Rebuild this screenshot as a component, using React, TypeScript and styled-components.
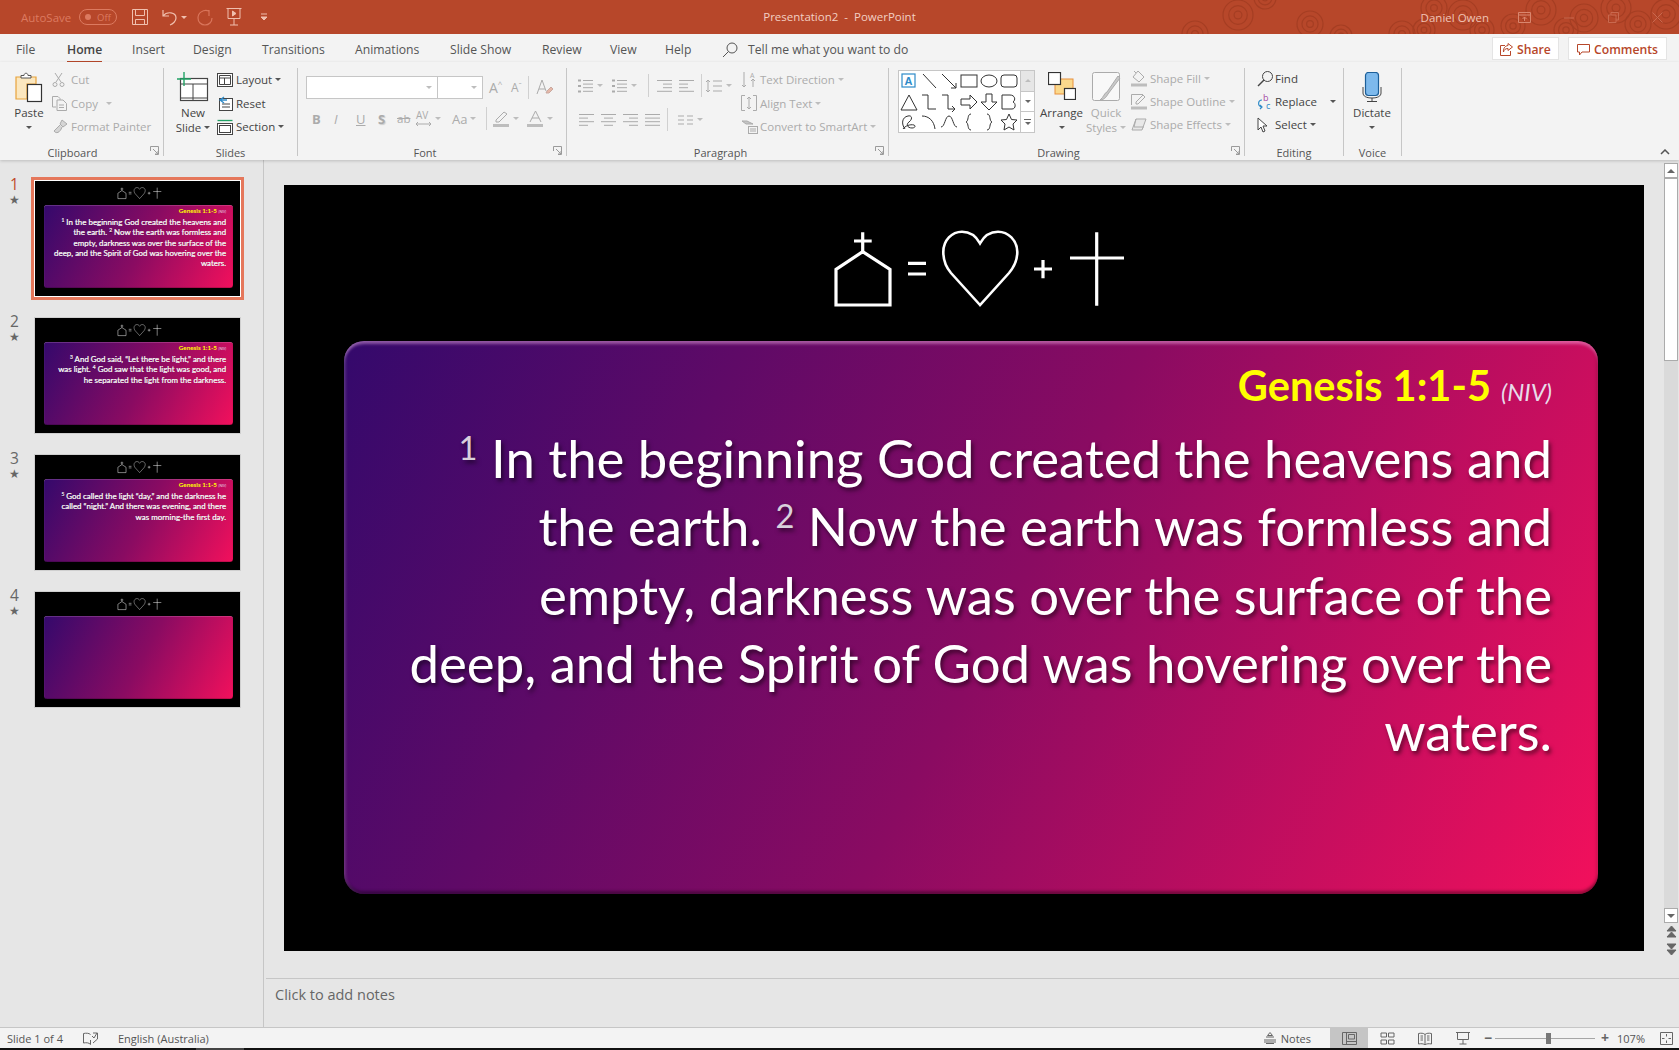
import React from 'react';
import styled, { createGlobalStyle } from 'styled-components';

const GREY = '#ABABAB';
const BLUE = '#2E8BC9';

const GlobalStyle = createGlobalStyle`
  html, body { margin: 0; padding: 0; background: #000; }
  * { box-sizing: border-box; }
`;

const Sup = styled.sup`
  font-size: 0.62em;
  line-height: 0;
  color: #d9d0dc;
  vertical-align: 0.55em;
`;

type IconProps = { w: number; h: number; c?: string; sw?: number; children: React.ReactNode };

const Icon: React.FC<IconProps> = ({ w, h, c = GREY, sw = 1, children }) => (
  <IconSvg width={w} height={h} viewBox={`0 0 ${w} ${h}`} fill="none" stroke={c} strokeWidth={sw}>
    {children}
  </IconSvg>
);

const Symbols: React.FC = () => (
  <svg width="300" height="82" viewBox="0 0 300 82" fill="none" stroke="#fff" strokeWidth="3.2">
    <path d="M6 77V41.3L32.7 23.7 60 41.3V77Z" />
    <path d="M32.7 4.3V23.7M24 13H41.7" />
    <path d="M78 35.3H96M78 46H96" />
    <path
      d="M150 77L121 45C115 38 113.3 30 113.3 24C113.3 12 122 3.7 132 3.7C140 3.7 146 8 150 15.3C154 8 160 3.7 168 3.7C178 3.7 187.3 12 187.3 24C187.3 30 185 38 179 45Z"
      strokeWidth="2.6"
    />
    <path d="M204 41H222M213 32V50.3" />
    <path d="M266.7 4.3V77.7M240 30H294" />
  </svg>
);

type SlideData = { verse: boolean; lines: React.ReactNode[] };

const SLIDES: SlideData[] = [
  {
    verse: true,
    lines: [
      <><Sup>1</Sup> In the beginning God created the heavens and</>,
      <>the earth. <Sup>2</Sup> Now the earth was formless and</>,
      <>empty, darkness was over the surface of the</>,
      <>deep, and the Spirit of God was hovering over the</>,
      <>waters.</>,
    ],
  },
  {
    verse: true,
    lines: [
      <><Sup>3</Sup> And God said, “Let there be light,” and there</>,
      <>was light. <Sup>4</Sup> God saw that the light was good, and</>,
      <>he separated the light from the darkness.</>,
    ],
  },
  {
    verse: true,
    lines: [
      <><Sup>5</Sup> God called the light “day,” and the darkness he</>,
      <>called “night.” And there was evening, and there</>,
      <>was morning-the first day.</>,
    ],
  },
  { verse: false, lines: [] },
];

const SlideView: React.FC<{ data: SlideData; scale?: number }> = ({ data, scale = 1 }) => (
  <Slide $scale={scale}>
    <SymbolRow>
      <Symbols />
    </SymbolRow>
    <Panel>
      {data.verse && (
        <Reference>
          Genesis 1:1-5 <small>(NIV)</small>
        </Reference>
      )}
      <Verses $thumb={scale < 1}>
        {data.lines.map((line, i) => (
          <div key={i}>{line}</div>
        ))}
      </Verses>
    </Panel>
  </Slide>
);

const RINGS = [
  [1195, 34, 13], [1238, 15, 15], [1265, -2, 11], [1310, 24, 13], [1341, 36, 11], [1402, 34, 13],
  [1424, 30, 11], [1434, 8, 13], [1463, 15, 15], [1482, 30, 12], [1513, 26, 12], [1541, 10, 15],
  [1566, 30, 12], [1584, 18, 14], [1616, 8, 15], [1638, 24, 13], [1666, 14, 15],
];

const TitleRings: React.FC = () => (
  <RingSvg width="1679" height="34" viewBox="0 0 1679 34" fill="none" stroke="#A53E23" strokeWidth="1.2">
    {RINGS.map(([x, y, r], i) => (
      <g key={i}>
        <circle cx={x} cy={y} r={r} />
        <circle cx={x} cy={y} r={r * 0.62} />
        <circle cx={x} cy={y} r={r * 0.26} />
      </g>
    ))}
  </RingSvg>
);

const TABS = ['File', 'Home', 'Insert', 'Design', 'Transitions', 'Animations', 'Slide Show', 'Review', 'View', 'Help'];
const TAB_X = [16, 67, 132, 193, 262, 355, 450, 542, 610, 665];

const Launcher: React.FC = () => (
  <LauncherBox>
    <Icon w={9} h={9} c="#9A9A9A">
      <path d="M.5 5V.5H8.5V8.5H5M3 3L8 8M8 5V8H5" />
    </Icon>
  </LauncherBox>
);

const Small: React.FC<{ icon: React.ReactNode; label: string; off?: boolean; caret?: boolean; iconW?: number }> = ({
  icon, label, off, caret, iconW = 16,
}) => (
  <SmallRow $off={off}>
    <SmallIcon $w={iconW}>{icon}</SmallIcon>
    <span>{label}</span>
    {caret && <Caret $c={off ? '#BDBDBD' : '#555'} />}
  </SmallRow>
);

const ListLines: React.FC<{ x?: number; lefts?: number[]; rights?: number[]; marks?: boolean }> = ({
  x = 0, lefts = [0, 0, 0, 0], rights = [15, 15, 15, 15], marks,
}) => (
  <Icon w={16} h={14}>
    {lefts.map((l, i) => (
      <path key={i} d={`M${x + l} ${1.5 + i * 3.6}H${rights[i]}`} />
    ))}
    {marks && <path d="M0 1.5H3M0 7H3M0 12.5H3" strokeWidth="2" />}
  </Icon>
);

const GalleryShapes: React.ReactNode[] = [
  <g key="a"><rect x="3" y="3" width="13" height="13" stroke={BLUE} strokeWidth="1.2" /><text x="5.6" y="13.5" fontSize="11" fontWeight="700" fontFamily="Liberation Sans, sans-serif" fill={BLUE} stroke="none">A</text></g>,
  <path key="b" d="M4 3L17 17" />,
  <path key="c" d="M3 3L17 17M12 17H17V12" />,
  <rect key="d" x="2" y="4" width="16" height="12" />,
  <ellipse key="e" cx="10" cy="10" rx="8" ry="6" />,
  <rect key="f" x="2" y="4" width="16" height="12" rx="3" />,
  <path key="g" d="M10 3L2 18H18Z" />,
  <path key="h" d="M3 3H9V17H17" />,
  <path key="i" d="M3 3H9V17H16M13 14L16 17L13 20" />,
  <path key="j" d="M2 7H11V3L18 10L11 17V13H2Z" />,
  <path key="k" d="M7 2H13V10H18L10 18L2 10H7Z" />,
  <path key="l" d="M3 3H11C16 3 17 8 14 10C17 11 17 17 13 17H3Z" />,
  <path key="m" d="M6 17C2 12 3 5 9 4C13 3 14 7 10 10C7 12 8 16 13 16C16 16 17 14 15 13C11 12 6 14 4 17" />,
  <path key="n" d="M3 4C10 4 15 9 16 17" />,
  <path key="o" d="M2 15C6 15 6 4 10 4C14 4 14 15 18 15" />,
  <path key="p" d="M12 2C8 2 10 9 7 10C10 11 8 18 12 18" />,
  <path key="q" d="M8 2C12 2 10 9 13 10C10 11 12 18 8 18" />,
  <path key="r" d="M10 2L12.5 7.5L18 8L14 12L15 18L10 15L5 18L6 12L2 8L7.5 7.5Z" />,
];

const App: React.FC = () => (
  <Page>
    <GlobalStyle />
    <TitleBar>
      <TitleRings />
      <Qat>
        <AutoSave>AutoSave</AutoSave>
        <Toggle><Dot /><span>Off</span></Toggle>
        <QatIcon $x={15}>
          <Icon w={16} h={16} c="#F0BFAE">
            <path d="M.5.5H15.5V15.5H.5ZM3.5.5V6.5H12.5V.5M3.5 15.5V10.5H12.5V15.5" />
          </Icon>
        </QatIcon>
        <QatIcon $x={14}>
          <Icon w={16} h={17} c="#F0BFAE" sw={1.2}>
            <path d="M1 1V7H7M1 7C5 2 14 3 14 9C14 12 11 15 8 16" />
          </Icon>
        </QatIcon>
        <Caret $c="#F0BFAE" />
        <QatIcon $x={10}>
          <Icon w={16} h={17} c="#D9755B" sw={1.2}>
            <path d="M12 1V7M12 2C6 0 1 4 1 9C1 13 4 16 8 16C12 16 15 13 15 9" />
          </Icon>
        </QatIcon>
        <QatIcon $x={13}>
          <Icon w={16} h={18} c="#F0BFAE">
            <path d="M.5.5H15.5M2 .5V10.5H14V.5M8 10.5V17M4 17H12" />
            <path d="M6.5 3L10 5.5L6.5 8Z" fill="#F0BFAE" />
          </Icon>
        </QatIcon>
        <QatIcon $x={18}>
          <Icon w={8} h={8} c="#F0BFAE">
            <path d="M1 1H7" />
            <path d="M1 4H7L4 7Z" fill="#F0BFAE" />
          </Icon>
        </QatIcon>
      </Qat>
      <DocTitle>Presentation2  -  PowerPoint</DocTitle>
      <UserArea>
        <UserName>Daniel Owen</UserName>
        <WindowIcons>
          <Icon w={13} h={11} c="#D9866E"><path d="M.5.5H12.5V10.5H.5ZM.5 3H12.5M6.5 9V5M4.5 7L6.5 5L8.5 7" /></Icon>
          <Icon w={11} h={11} c="#C9694F"><path d="M0 6H10" /></Icon>
          <Icon w={11} h={11} c="#C9694F"><path d="M.5 3H8V10.5H.5ZM3 3V.5H10.5V8H8" /></Icon>
          <Icon w={11} h={11} c="#C9694F"><path d="M.5.5L10.5 10.5M10.5.5L.5 10.5" /></Icon>
        </WindowIcons>
      </UserArea>
    </TitleBar>

    <TabRow>
      {TABS.map((tab, i) => (
        <Tab key={tab} $active={tab === 'Home'} $x={TAB_X[i]}>{tab}</Tab>
      ))}
      <Search $x={722}>
        <Icon w={16} h={16} c="#555">
          <circle cx="10" cy="6" r="5" />
          <path d="M6.5 9.5L1 15" />
        </Icon>
        <span>Tell me what you want to do</span>
      </Search>
      <ShareBox>
        <Icon w={13} h={13} c="#B7472A"><path d="M8 .5L12.5 4L8 7.5V5.5C5 5.5 4 7 3.5 9C3 6 4.5 3 8 2.5ZM5 2.5H.5V12.5H10.5V8" /></Icon>
        Share
      </ShareBox>
      <CommentBox>
        <Icon w={13} h={13} c="#B7472A"><path d="M.5 1.5H12.5V9H5L2.5 12V9H.5Z" /></Icon>
        Comments
      </CommentBox>
    </TabRow>

    <Ribbon>
      <Group $w={164}>
        <GroupBody>
          <Big $w={36} $ml={11}>
            <BigIcon>
              <Icon w={28} h={31} c="#555">
                <path d="M1 5H21V12H12V27H1Z" stroke="#E8A33D" strokeWidth="1.2" fill="#FBE7BF" />
                <path d="M6 6V3.5H9C9 .5 13 .5 13 3.5H16V6Z" fill="#fff" />
                <rect x="12.5" y="12.5" width="14" height="17" fill="#fff" stroke="#333" strokeWidth="1.2" />
              </Icon>
            </BigIcon>
            <span>Paste</span>
            <Caret $c="#555" />
          </Big>
          <SmallCol $ml={5}>
            <Small off label="Cut" icon={<Icon w={13} h={15}><path d="M3 1L9 10M10 1L4 10" /><circle cx="3" cy="12.5" r="2" /><circle cx="10" cy="12.5" r="2" /></Icon>} />
            <SmallRow $off>
              <SmallIcon $w={16}><Icon w={16} h={16}><path d="M4 12H.5V1.5H6L8 3.5V5M5 5H11L14.5 8.5V15.5H5ZM7 10H12M7 12.5H12" /></Icon></SmallIcon>
              <span>Copy</span>
              <CaretGap><Caret $c="#BDBDBD" /></CaretGap>
            </SmallRow>
            <Small off label="Format Painter" icon={<Icon w={17} h={16}><path d="M10 1L15 5L11 8L8 5ZM8 6L2 12C4 15 8 14 10 8" fill="#D5D5D5" /></Icon>} />
          </SmallCol>
        </GroupBody>
        <GroupLabel $pr={18}>Clipboard</GroupLabel>
        <Launcher />
      </Group>

      <Group $w={134}>
        <GroupBody>
          <Big $w={42} $ml={8}>
            <BigIcon>
              <Icon w={32} h={30} c="#444">
                <rect x="3.5" y="6.5" width="27" height="22" fill="#fff" strokeWidth="1.2" />
                <path d="M3.5 12H30.5M16 12V28.5M3.5 26H30.5" />
                <path d="M7 0V14M0 7H14" stroke="#21A366" strokeWidth="1.4" />
              </Icon>
            </BigIcon>
            <span>New</span>
            <BigLine>Slide<Caret $c="#555" /></BigLine>
          </Big>
          <SmallCol $ml={3}>
            <Small caret label="Layout" iconW={16} icon={<Icon w={16} h={14} c="#444"><rect x=".5" y=".5" width="15" height="13" fill="#fff" /><path d="M2.5 2.5H13.5V5H2.5ZM2.5 5V11.5H7.5V5M7.5 5V11.5H13.5V5" /></Icon>} />
            <Small label="Reset" iconW={16} icon={<Icon w={16} h={15} c="#444"><rect x="2.5" y="2.5" width="13" height="12" fill="#fff" /><path d="M5 8H13M5 11H13" /><path d="M7 1L3 4L7 7M3 4H10" stroke={BLUE} strokeWidth="1.3" /></Icon>} />
            <Small caret label="Section" iconW={16} icon={<Icon w={16} h={16} c="#444"><path d="M.5 1.5H15.5" stroke="#21A366" strokeWidth="1.3" /><rect x=".5" y="4.5" width="15" height="11" fill="#fff" /><rect x="2.5" y="6.5" width="11" height="7" /></Icon>} />
          </SmallCol>
        </GroupBody>
        <GroupLabel>Slides</GroupLabel>
      </Group>

      <Group $w={269}>
        <GroupBody $column>
          <ToolRow $mt={8} $ml={8}>
            <FontBox $w={132}><Caret $c="#BDBDBD" /></FontBox>
            <FontBox $w={46}><Caret $c="#BDBDBD" /></FontBox>
            <TextTool $w={22} $ml={1} $size={14}>A<Tiny>^</Tiny></TextTool>
            <TextTool $w={22} $size={12}>A<Tiny>ˇ</Tiny></TextTool>
            <ToolDivider $ml={1} $mr={7} />
            <Icon w={17} h={17}>
              <path d="M6 1L1 15M6 1L10 12M3 10H9" />
              <path d="M11 12L15 8L17 10L13 14H10Z" fill="#E6B8A8" stroke="#C9A9A0" />
            </Icon>
          </ToolRow>
          <ToolRow $mt={8} $ml={8}>
            <TextTool $w={22} $bold $size={13}>B</TextTool>
            <TextTool $w={22} $italic $size={13}>I</TextTool>
            <TextTool $w={22} $under $size={13}>U</TextTool>
            <TextTool $w={22} $bold $size={13} $shadow>S</TextTool>
            <TextTool $w={24} $ml={-3} $strike $size={11.5}>ab</TextTool>
            <ToolCell $w={31}>
              <Icon w={17} h={18}>
                <text x="1" y="9" fontSize="10" fontFamily="Open Sans, sans-serif" fill={GREY} stroke="none">AV</text>
                <path d="M1 14H16M3 12L1 14L3 16M14 12L16 14L14 16" />
              </Icon>
              <Caret $c="#BDBDBD" />
            </ToolCell>
            <TextTool $w={34} $size={13}>Aa<Caret $c="#BDBDBD" /></TextTool>
            <ToolDivider $ml={6} $mr={6} />
            <ToolCell $w={34}>
              <Icon w={17} h={17}>
                <path d="M3 10L11 2L14 4L6 12H3Z" />
                <path d="M0 15.5H16" strokeWidth="3" stroke="#BDBDBD" />
              </Icon>
              <Caret $c="#BDBDBD" />
            </ToolCell>
            <ToolCell $w={34}>
              <Icon w={17} h={17}>
                <path d="M3 12L8.5 1L14 12M5 8H12" />
                <path d="M0 15.5H16" strokeWidth="3" stroke="#BDBDBD" />
              </Icon>
              <Caret $c="#BDBDBD" />
            </ToolCell>
          </ToolRow>
        </GroupBody>
        <GroupLabel $pr={14}>Font</GroupLabel>
        <Launcher />
      </Group>

      <Group $w={322}>
        <GroupBody>
          <ParaTools>
            <ToolRow $mt={6} $ml={11}>
              <ToolCell $w={34}><ListLines x={5} marks /><Caret $c="#BDBDBD" /></ToolCell>
              <ToolCell $w={35}><ListLines x={5} marks /><Caret $c="#BDBDBD" /></ToolCell>
              <ToolDivider $ml={1} $mr={8} />
              <ToolCell $w={22}><ListLines lefts={[0, 6, 6, 0]} /></ToolCell>
              <ToolCell $w={22}><ListLines rights={[15, 9, 9, 15]} /></ToolCell>
              <ToolDivider $ml={0} $mr={3} />
              <ToolCell $w={30}>
                <Icon w={18} h={14}>
                  <path d="M3 1V13M1 3L3 1L5 3M1 11L3 13L5 11M8 2H17M8 7H17M8 12H17" />
                </Icon>
                <Caret $c="#BDBDBD" />
              </ToolCell>
            </ToolRow>
            <ToolRow $mt={11} $ml={12}>
              <ToolCell $w={22}><ListLines rights={[15, 9, 15, 9]} /></ToolCell>
              <ToolCell $w={22}><ListLines lefts={[0, 3, 0, 3]} rights={[15, 12, 15, 12]} /></ToolCell>
              <ToolCell $w={22}><ListLines lefts={[0, 6, 0, 6]} /></ToolCell>
              <ToolCell $w={22}><ListLines /></ToolCell>
              <ToolDivider $ml={0} $mr={10} />
              <ToolCell $w={30}>
                <Icon w={16} h={14}><path d="M0 3H6M0 7H6M0 11H6M9 3H15M9 7H15M9 11H15" /></Icon>
                <Caret $c="#BDBDBD" />
              </ToolCell>
            </ToolRow>
          </ParaTools>
          <SmallCol $ml={0}>
            <Small off caret label="Text Direction" iconW={16} icon={<Icon w={16} h={18}><path d="M3 1V16M1 14L3 16L5 14M12 16V8M10 10L12 8L14 10" /><text x="9" y="7" fontSize="7" fontFamily="Open Sans, sans-serif" fill={GREY} stroke="none">A</text></Icon>} />
            <Small off caret label="Align Text" iconW={16} icon={<Icon w={16} h={16}><path d="M4 .5H.5V15.5H4M12 .5H15.5V15.5H12M8 2V14M6 4L8 2L10 4M6 12L8 14L10 12" /></Icon>} />
            <Small off caret label="Convert to SmartArt" iconW={16} icon={<Icon w={17} h={14}><path d="M1 1H6L12 4H5Z" fill="#C4C4C4" /><rect x="7.5" y="6.5" width="9" height="7" /><path d="M9 9H15M9 11H15" /></Icon>} />
          </SmallCol>
        </GroupBody>
        <GroupLabel $pr={14}>Paragraph</GroupLabel>
        <Launcher />
      </Group>

      <Group $w={356}>
        <GroupBody>
          <Gallery>
            <ShapeGrid>
              {GalleryShapes.map((shape, i) => (
                <svg key={i} width="20" height="21" viewBox="0 0 20 21" fill="none" stroke="#333" strokeWidth="1">
                  {shape}
                </svg>
              ))}
            </ShapeGrid>
            <GalleryScroll>
              <GalleryBtn $shade><Caret $c="#BDBDBD" $up /></GalleryBtn>
              <GalleryBtn><Caret $c="#666" /></GalleryBtn>
              <GalleryBtn $last><More /><Caret $c="#666" /></GalleryBtn>
            </GalleryScroll>
          </Gallery>
          <Big $w={45} $ml={4}>
            <BigIcon>
              <Icon w={28} h={28} c="#333">
                <rect x="7" y="7" width="18" height="15" fill="#FBD98C" stroke="#E8903D" />
                <rect x=".5" y=".5" width="12" height="12" fill="#fff" strokeWidth="1.2" />
                <rect x="16.5" y="16.5" width="11" height="11" fill="#fff" strokeWidth="1.2" />
              </Icon>
            </BigIcon>
            <span>Arrange</span>
            <Caret $c="#555" />
          </Big>
          <Big $w={36} $ml={4} $off>
            <BigIcon>
              <Icon w={29} h={30}>
                <rect x=".5" y=".5" width="27" height="28" rx="2" fill="#F8F8F8" />
                <path d="M28 6L16 22C14 26 11 28 8 28C12 25 12 21 15 20L26 4Z" fill="#C8C8C8" />
              </Icon>
            </BigIcon>
            <span>Quick</span>
            <BigLine>Styles<Caret $c="#BDBDBD" /></BigLine>
          </Big>
          <SmallCol $ml={7} $mt={-1} $tight>
            <Small off caret label="Shape Fill" iconW={16} icon={<Icon w={16} h={17}><path d="M7 1L13 7L8 12L2 7ZM5 3L3 1" /><path d="M0 15H16" stroke="#BDBDBD" strokeWidth="3" /></Icon>} />
            <Small off caret label="Shape Outline" iconW={16} icon={<Icon w={16} h={17}><path d="M.5 12V1.5H12M5 9L12 2L14 4L7 11H5Z" /><path d="M0 15H16" stroke="#BDBDBD" strokeWidth="3" /></Icon>} />
            <Small off caret label="Shape Effects" iconW={16} icon={<Icon w={16} h={13}><path d="M5 1H15L11 12H1Z" fill="#E8E8E8" /><path d="M5 1L3 9H13" /></Icon>} />
          </SmallCol>
        </GroupBody>
        <GroupLabel $pr={16}>Drawing</GroupLabel>
        <Launcher />
      </Group>

      <Group $w={99}>
        <GroupBody>
          <SmallCol $ml={12} $mt={-1} $tight>
            <Small label="Find" iconW={15} icon={<Icon w={16} h={16} c="#444"><circle cx="10.5" cy="5.5" r="5" /><path d="M7 9L1 15" strokeWidth="1.4" /></Icon>} />
            <SmallRow>
              <SmallIcon $w={15}>
                <Icon w={15} h={16} c="#2E8BC9" sw={1.2}>
                  <text x="6" y="7" fontSize="9" fontFamily="Open Sans, sans-serif" fill="#A349A4" stroke="none">b</text>
                  <text x="9" y="15" fontSize="9" fontFamily="Open Sans, sans-serif" fill="#2E8BC9" stroke="none">c</text>
                  <path d="M5 6C1 6 0 12 5 13M3 11L5 13L3 15" />
                </Icon>
              </SmallIcon>
              <span>Replace</span>
              <CaretGap $w={10}><Caret $c="#555" /></CaretGap>
            </SmallRow>
            <Small caret label="Select" iconW={15} icon={<Icon w={11} h={16} c="#444"><path d="M1 1V13L4 10L6 15L8 14L6 9H10Z" fill="#fff" /></Icon>} />
          </SmallCol>
        </GroupBody>
        <GroupLabel>Editing</GroupLabel>
      </Group>

      <Group $w={58}>
        <GroupBody>
          <Big $w={56} $ml={0}>
            <BigIcon>
              <Icon w={20} h={30} c="#444">
                <rect x="3.5" y=".5" width="13" height="23" rx="3" fill="#7DB9EC" stroke="#1C5F99" strokeWidth="1.2" />
                <path d="M1 15V21C1 24 4 26 10 26C16 26 19 24 19 21V15M10 26V29.5M5 29.5H15" />
              </Icon>
            </BigIcon>
            <span>Dictate</span>
            <Caret $c="#555" />
          </Big>
        </GroupBody>
        <GroupLabel>Voice</GroupLabel>
      </Group>

      <Collapse>
        <Icon w={10} h={6} c="#555" sw={1.5}><path d="M1 5L5 1L9 5" /></Icon>
      </Collapse>
    </Ribbon>

    <Workspace>
      <Sidebar>
        {SLIDES.map((slide, i) => (
          <ThumbRow key={i}>
            <ThumbMeta>
              <ThumbNumber $active={i === 0}>{i + 1}</ThumbNumber>
              <Star>★</Star>
            </ThumbMeta>
            <ThumbFrame $active={i === 0}>
              <SlideView data={slide} scale={205 / 1360} />
            </ThumbFrame>
          </ThumbRow>
        ))}
      </Sidebar>
      <Main>
        <Stage>
          <Canvas>
            <SlideView data={SLIDES[0]} />
          </Canvas>
          <ScrollBar>
            <ScrollBtn><Caret $c="#666" $up $size={4} /></ScrollBtn>
            <ScrollTrack><ScrollThumb /></ScrollTrack>
            <ScrollBtn><Caret $c="#666" $size={4} /></ScrollBtn>
            <SlideNav>
              <Icon w={11} h={12} c="#666"><path d="M1 5H10L5.5 0ZM1 11H10L5.5 6Z" fill="#666" /></Icon>
              <Icon w={11} h={12} c="#666"><path d="M1 1H10L5.5 6ZM1 7H10L5.5 12Z" fill="#666" /></Icon>
            </SlideNav>
          </ScrollBar>
        </Stage>
        <Notes>Click to add notes</Notes>
      </Main>
    </Workspace>

    <StatusBar>
      <StatusLeft>
        <span>Slide 1 of 4</span>
        <Icon w={15} h={13} c="#666"><path d="M7.5 2.5C6 1 3 1 .5 1.5V11C3 10.5 6 10.5 7.5 12.5V8M10 1H14.5V7L10 11M9 4L11 6L14 1" /></Icon>
        <span>English (Australia)</span>
      </StatusLeft>
      <StatusRight>
        <NotesBtn>
          <Icon w={12} h={12} c="#666"><path d="M0 8H12M0 10H12M2 11.5H10M2 5H10M6 .5L8.5 3.5H3.5Z" /></Icon>
          Notes
        </NotesBtn>
        <ViewBtn $active>
          <Icon w={15} h={13} c="#666"><path d="M.5.5H14.5V12.5H.5ZM4.5.5V12.5M4.5 9.5H14.5M6.5 2.5H12.5V7H6.5Z" /></Icon>
        </ViewBtn>
        <ViewBtn>
          <Icon w={15} h={13} c="#666"><path d="M1 1H6.5V5H1ZM8.5 1H14V5H8.5ZM1 8H6.5V12H1ZM8.5 8H14V12H8.5Z" /></Icon>
        </ViewBtn>
        <ViewBtn>
          <Icon w={14} h={13} c="#666"><path d="M.5 1.5C3 1 5.5 1 7 2.5C8.5 1 11 1 13.5 1.5V12C11 11.5 8.5 11.5 7 13C5.5 11.5 3 11.5 .5 12ZM7 2.5V13M2.5 4H5M2.5 6H5M2.5 8H5M9 4H11.5M9 6H11.5M9 8H11.5" /></Icon>
        </ViewBtn>
        <ViewBtn>
          <Icon w={14} h={14} c="#666"><path d="M0 1.5H14M1.5 1.5V8.5H12.5V1.5M7 8.5V13M3.5 13H10.5" /></Icon>
        </ViewBtn>
        <ZoomSign $ml={2}>−</ZoomSign>
        <ZoomTrack><ZoomThumb /></ZoomTrack>
        <ZoomSign>+</ZoomSign>
        <ZoomValue>107%</ZoomValue>
        <Icon w={13} h={13} c="#666"><path d="M.5.5H12.5V12.5H.5ZM6.5 2V4.5M6.5 8.5V11M2 6.5H4.5M8.5 6.5H11" /></Icon>
      </StatusRight>
    </StatusBar>
    <BottomStrip><StripChunk /></BottomStrip>
  </Page>
);

/* ---------- shared ---------- */

const IconSvg = styled.svg`
  display: block;
  flex: none;
`;

const Caret = styled.i<{ $c: string; $up?: boolean; $size?: number }>`
  display: inline-block;
  flex: none;
  width: 0;
  height: 0;
  margin-left: 3px;
  border-left: ${({ $size }) => $size ?? 3}px solid transparent;
  border-right: ${({ $size }) => $size ?? 3}px solid transparent;
  ${({ $up, $c, $size }) =>
    $up ? `border-bottom: ${$size ?? 3}px solid ${$c};` : `border-top: ${$size ?? 3}px solid ${$c};`}
`;

const CaretGap = styled.span<{ $w?: number }>`
  display: inline-flex;
  margin-left: ${({ $w }) => $w ?? 5}px;
`;

const Page = styled.div`
  width: 1679px;
  height: 1050px;
  overflow: hidden;
  display: flex;
  flex-direction: column;
  background: #e6e6e6;
  font-family: 'Open Sans', 'Noto Sans', sans-serif;
  color: #444;
`;

/* ---------- title bar ---------- */

const TitleBar = styled.header`
  position: relative;
  flex: none;
  height: 34px;
  background: #b7472a;
  display: grid;
  grid-template-columns: 1fr auto 1fr;
  align-items: center;
  overflow: hidden;
`;

const RingSvg = styled.svg`
  position: absolute;
  left: 0;
  top: 0;
`;

const Qat = styled.div`
  position: relative;
  display: flex;
  align-items: center;
  padding-left: 21px;
`;

const AutoSave = styled.span`
  font-size: 11.5px;
  color: #dc7a60;
  width: 58px;
`;

const Toggle = styled.div`
  width: 38px;
  height: 16px;
  border: 1px solid #dc7a60;
  border-radius: 8px;
  display: flex;
  align-items: center;
  padding-left: 5px;
  gap: 6px;
  font-size: 9.5px;
  color: #dc7a60;
`;

const Dot = styled.b`
  width: 6px;
  height: 6px;
  border-radius: 50%;
  background: #dc7a60;
`;

const QatIcon = styled.span<{ $x: number }>`
  margin-left: ${({ $x }) => $x}px;
`;

const DocTitle = styled.div`
  position: relative;
  top: -1px;
  font-size: 11.5px;
  color: #f3cfc3;
  white-space: pre;
`;

const UserArea = styled.div`
  position: relative;
  display: flex;
  align-items: center;
  justify-content: flex-end;
  padding-right: 16px;
`;

const UserName = styled.span`
  font-size: 11.5px;
  color: #f0c4b6;
  margin-right: 29px;
`;

const WindowIcons = styled.div`
  display: flex;
  align-items: center;
  gap: 33px;
`;

/* ---------- tabs ---------- */

const TabRow = styled.nav`
  position: relative;
  flex: none;
  height: 28px;
  background: #f3f3f3;
  display: flex;
  align-items: center;
  font-size: 12.2px;
`;

const Tab = styled.span<{ $active?: boolean; $x: number }>`
  position: absolute;
  left: ${({ $x }) => $x}px;
  top: 5px;
  height: 24.5px;
  line-height: 22px;
  font-weight: ${({ $active }) => ($active ? 600 : 400)};
  color: ${({ $active }) => ($active ? '#444' : '#555')};
  border-bottom: ${({ $active }) => ($active ? '3px solid #b7472a' : 'none')};
`;

const Search = styled.div<{ $x: number }>`
  position: absolute;
  left: ${({ $x }) => $x}px;
  top: 7px;
  display: flex;
  align-items: center;
  gap: 10px;
  color: #555;
`;

const ShareBox = styled.div`
  position: absolute;
  right: 120px;
  top: 3px;
  width: 67px;
  height: 23px;
  padding-top: 1px;
  background: #fff;
  border: 1px solid #e4e4e4;
  display: flex;
  align-items: center;
  justify-content: center;
  gap: 4px;
  color: #b7472a;
  font-weight: 600;
`;

const CommentBox = styled(ShareBox)`
  right: 12px;
  width: 99px;
`;

/* ---------- ribbon ---------- */

const Ribbon = styled.section`
  position: relative;
  z-index: 1;
  flex: none;
  height: 98px;
  padding: 6px 0 4px;
  background: #f3f3f3;
  box-shadow: 0 1px 3px rgba(0, 0, 0, 0.18);
  display: flex;
  font-size: 11.5px;
`;

const Group = styled.div<{ $w: number }>`
  position: relative;
  flex: none;
  width: ${({ $w }) => $w}px;
  display: flex;
  flex-direction: column;
  border-right: 1px solid #c6c6c6;
`;

const GroupBody = styled.div<{ $column?: boolean }>`
  height: 78px;
  flex: none;
  display: flex;
  flex-direction: ${({ $column }) => ($column ? 'column' : 'row')};
  align-items: flex-start;
`;

const GroupLabel = styled.div<{ $pr?: number }>`
  height: 12px;
  margin-top: 1px;
  line-height: 12px;
  font-size: 11px;
  text-align: center;
  color: #555;
  padding-right: ${({ $pr }) => $pr ?? 0}px;
`;

const LauncherBox = styled.span`
  position: absolute;
  right: 4px;
  bottom: 1px;
`;

const Big = styled.div<{ $w: number; $ml: number; $off?: boolean }>`
  flex: none;
  width: ${({ $w }) => $w}px;
  margin-left: ${({ $ml }) => $ml}px;
  display: flex;
  flex-direction: column;
  align-items: center;
  color: ${({ $off }) => ($off ? GREY : '#444')};
  line-height: 15px;
  white-space: nowrap;

  & > i {
    margin: 6px 0 0;
  }
`;

const BigIcon = styled.div`
  height: 37px;
  padding-top: 4px;
`;

const BigLine = styled.div`
  display: flex;
  align-items: center;
`;

const SmallCol = styled.div<{ $ml: number; $mt?: number; $tight?: boolean }>`
  margin-left: ${({ $ml }) => $ml}px;
  margin-top: ${({ $mt }) => $mt ?? 0}px;
  display: flex;
  flex-direction: column;

  & > div {
    height: ${({ $tight }) => ($tight ? 23 : 23.5)}px;
  }
`;

const SmallRow = styled.div<{ $off?: boolean }>`
  display: flex;
  align-items: center;
  white-space: nowrap;
  color: ${({ $off }) => ($off ? GREY : '#444')};
`;

const SmallIcon = styled.span<{ $w: number }>`
  flex: none;
  width: ${({ $w }) => $w}px;
  margin-right: 3px;
`;

const ToolRow = styled.div<{ $mt: number; $ml: number }>`
  height: 23px;
  margin-top: ${({ $mt }) => $mt}px;
  margin-left: ${({ $ml }) => $ml}px;
  display: flex;
  align-items: center;
`;

const FontBox = styled.div<{ $w: number }>`
  width: ${({ $w }) => $w}px;
  height: 23px;
  margin-right: -1px;
  background: #fff;
  border: 1px solid #c6c6c6;
  display: flex;
  align-items: center;
  justify-content: flex-end;
  padding-right: 5px;
`;

const ToolCell = styled.div<{ $w: number }>`
  flex: none;
  width: ${({ $w }) => $w}px;
  display: flex;
  align-items: center;
`;

const TextTool = styled.div<{
  $w: number;
  $ml?: number;
  $size: number;
  $bold?: boolean;
  $italic?: boolean;
  $under?: boolean;
  $strike?: boolean;
  $shadow?: boolean;
}>`
  flex: none;
  width: ${({ $w }) => $w}px;
  margin-left: ${({ $ml }) => $ml ?? 0}px;
  display: flex;
  align-items: center;
  padding-left: 6px;
  color: ${GREY};
  font-size: ${({ $size }) => $size}px;
  font-weight: ${({ $bold }) => ($bold ? 700 : 400)};
  font-style: ${({ $italic }) => ($italic ? 'italic' : 'normal')};
  text-decoration: ${({ $under, $strike }) => ($under ? 'underline' : $strike ? 'line-through' : 'none')};
  text-shadow: ${({ $shadow }) => ($shadow ? '1px 1px 1px #ccc' : 'none')};
`;

const Tiny = styled.span`
  font-size: 8px;
  align-self: flex-start;
`;

const ToolDivider = styled.span<{ $ml: number; $mr: number }>`
  flex: none;
  width: 1px;
  height: 23px;
  margin-left: ${({ $ml }) => $ml}px;
  margin-right: ${({ $mr }) => $mr}px;
  background: #d0d0d0;
`;

const ParaTools = styled.div`
  flex: none;
  width: 174px;
`;

const Gallery = styled.div`
  flex: none;
  width: 137px;
  height: 63px;
  margin: 2px 0 0 9px;
  display: flex;
  background: #fff;
  border: 1px solid #c6c6c6;
`;

const ShapeGrid = styled.div`
  flex: none;
  width: 121px;
  display: grid;
  grid-template-columns: repeat(6, 20px);
  grid-auto-rows: 20.6px;
`;

const GalleryScroll = styled.div`
  flex: 1;
  display: flex;
  flex-direction: column;
  border-left: 1px solid #c6c6c6;
`;

const GalleryBtn = styled.div<{ $shade?: boolean; $last?: boolean }>`
  flex: 1;
  display: flex;
  flex-direction: column;
  align-items: center;
  justify-content: center;
  gap: 2px;
  background: ${({ $shade }) => ($shade ? '#e6e6e6' : '#fff')};
  border-bottom: ${({ $last }) => ($last ? 'none' : '1px solid #c6c6c6')};

  & > i {
    margin: 0;
  }
`;

const More = styled.span`
  width: 7px;
  height: 1px;
  background: #666;
`;

const Collapse = styled.div`
  position: absolute;
  right: 9px;
  bottom: 5px;
`;

/* ---------- workspace ---------- */

const Workspace = styled.div`
  flex: none;
  height: 867px;
  display: flex;
`;

const Sidebar = styled.aside`
  flex: none;
  width: 264px;
  padding-top: 20px;
  border-right: 1px solid #c6c6c6;
  display: flex;
  flex-direction: column;
  gap: 20px;
`;

const ThumbRow = styled.div`
  display: flex;
`;

const ThumbMeta = styled.div`
  flex: none;
  width: 34px;
  display: flex;
  flex-direction: column;
  align-items: center;
  padding-right: 5px;
`;

const ThumbNumber = styled.span<{ $active?: boolean }>`
  margin-top: -4px;
  font-size: 15.5px;
  line-height: 16px;
  color: ${({ $active }) => ($active ? '#c0492c' : '#666')};
`;

const Star = styled.span`
  margin-top: 2px;
  font-size: 12px;
  line-height: 12px;
  color: #666;
`;

const ThumbFrame = styled.div<{ $active?: boolean }>`
  flex: none;
  width: 207px;
  height: 117px;
  overflow: hidden;
  border: 1px solid ${({ $active }) => ($active ? '#fff' : '#cfcfcf')};
  outline: ${({ $active }) => ($active ? '3px solid #e5775b' : 'none')};
  background: #000;
`;

const Main = styled.main`
  flex: 1;
  min-width: 0;
  display: flex;
  flex-direction: column;
`;

const Stage = styled.div`
  flex: 1;
  min-height: 0;
  display: flex;
`;

const Canvas = styled.div`
  flex: none;
  width: 1400px;
  padding: 25px 20px 0;
`;

const ScrollBar = styled.div`
  flex: none;
  width: 14px;
  padding-top: 3px;
  display: flex;
  flex-direction: column;
`;

const ScrollBtn = styled.div`
  flex: none;
  height: 15px;
  background: #fff;
  border: 1px solid #ababab;
  display: flex;
  align-items: center;
  justify-content: center;

  & > i {
    margin: 0;
  }
`;

const ScrollTrack = styled.div`
  flex: 1;
  background: #dadada;
`;

const ScrollThumb = styled.div`
  height: 183px;
  background: #fff;
  border: 1px solid #ababab;
`;

const SlideNav = styled.div`
  flex: none;
  height: 55px;
  padding-top: 3px;
  display: flex;
  flex-direction: column;
  align-items: center;
  gap: 5px;
`;

const Notes = styled.div`
  flex: none;
  height: 49px;
  margin-left: 2px;
  border-top: 1px solid #c6c6c6;
  padding: 6px 0 0 9px;
  font-size: 14.5px;
  color: #666;
`;

/* ---------- slide ---------- */

const Slide = styled.div<{ $scale: number }>`
  width: 1360px;
  height: 766px;
  zoom: ${({ $scale }) => $scale};
  background: #000;
  display: flex;
  flex-direction: column;
  font-family: Lato, 'Open Sans', sans-serif;
`;

const SymbolRow = styled.div`
  flex: none;
  height: 156px;
  padding: 43px 0 0 546px;
`;

const Panel = styled.div`
  height: 553px;
  margin: 0 46px 0 60px;
  padding: 19px 46px 0 0;
  border-radius: 20px;
  background: linear-gradient(118deg, #34096c 0%, #8a0b62 52%, #f2105c 100%);
  box-shadow: inset 0 4px 3px -1px rgba(255, 190, 240, 0.42), inset 0 -4px 3px -1px rgba(0, 0, 0, 0.35),
    inset 3px 0 3px -1px rgba(255, 255, 255, 0.14), inset -3px 0 3px -1px rgba(0, 0, 0, 0.12);
  text-align: right;
`;

const Reference = styled.div`
  height: 50px;
  line-height: 50px;
  font-size: 41.5px;
  font-weight: 700;
  color: #ffff00;

  small {
    font-size: 24px;
    font-weight: 400;
    font-style: italic;
    color: #e8dcea;
  }
`;

const Verses = styled.div<{ $thumb?: boolean }>`
  margin-top: 14px;
  font-size: 52.7px;
  line-height: 68.3px;
  color: #fff;
  text-shadow: 2px 3px 4px rgba(0, 0, 0, 0.55);
  white-space: nowrap;
  -webkit-text-stroke: ${({ $thumb }) => ($thumb ? '1.5px #fff' : '0')};
`;

/* ---------- status bar ---------- */

const StatusBar = styled.footer`
  flex: none;
  height: 21px;
  background: #f3f3f3;
  border-top: 1px solid #c6c6c6;
  display: flex;
  align-items: center;
  justify-content: space-between;
  font-size: 11px;
  color: #555;
`;

const StatusLeft = styled.div`
  display: flex;
  align-items: center;
  gap: 20px;
  padding-left: 7px;
`;

const StatusRight = styled.div`
  height: 100%;
  display: flex;
  align-items: center;
  padding-right: 6px;
`;

const NotesBtn = styled.div`
  display: flex;
  align-items: center;
  gap: 5px;
  margin-right: 19px;
`;

const ViewBtn = styled.div<{ $active?: boolean }>`
  width: 38px;
  height: 100%;
  display: flex;
  align-items: center;
  justify-content: center;
  background: ${({ $active }) => ($active ? '#c5c5c5' : 'transparent')};
`;

const ZoomSign = styled.span<{ $ml?: number }>`
  width: 8px;
  margin-left: ${({ $ml }) => $ml ?? 0}px;
  font-size: 14px;
  font-weight: 700;
  line-height: 14px;
  color: #666;
`;

const ZoomTrack = styled.div`
  position: relative;
  width: 100px;
  height: 1px;
  margin: 0 6px 0 3px;
  background: #a6a6a6;
`;

const ZoomThumb = styled.span`
  position: absolute;
  left: 51px;
  top: -5px;
  width: 5px;
  height: 11px;
  background: #777;
`;

const ZoomValue = styled.span`
  margin: 0 15px 0 8px;
  font-size: 11px;
`;

const BottomStrip = styled.div`
  position: relative;
  flex: none;
  height: 2px;
  background: #111;
`;

const StripChunk = styled.span`
  position: absolute;
  left: 196px;
  top: 0;
  width: 48px;
  height: 100%;
  background: #444;
`;

export default App;
